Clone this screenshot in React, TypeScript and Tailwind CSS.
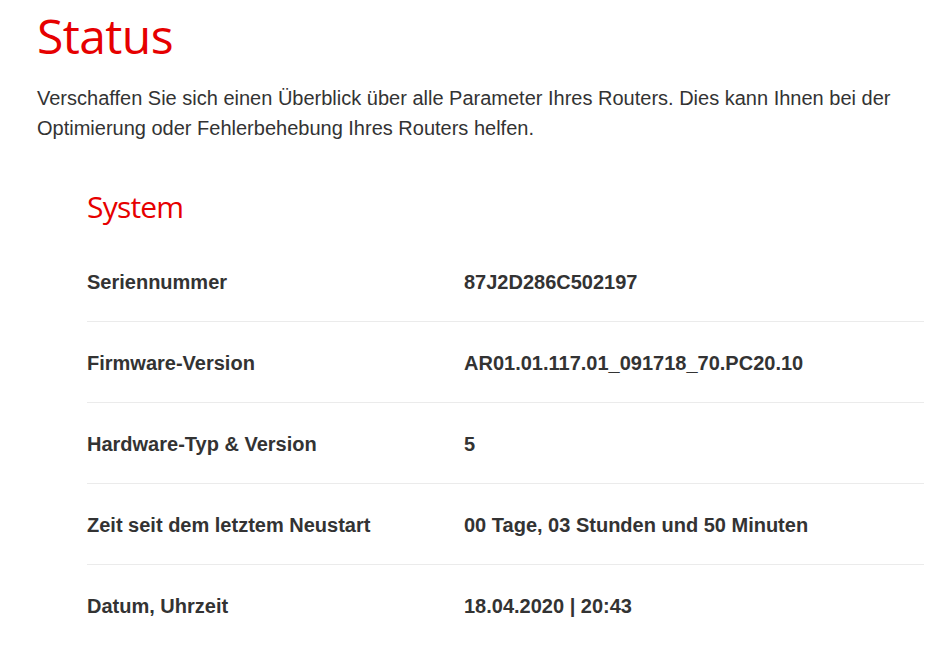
const rows: [string, string][] = [
  ["Seriennummer", "87J2D286C502197"],
  ["Firmware-Version", "AR01.01.117.01_091718_70.PC20.10"],
  ["Hardware-Typ & Version", "5"],
  ["Zeit seit dem letztem Neustart", "00 Tage, 03 Stunden und 50 Minuten"],
  ["Datum, Uhrzeit", "18.04.2020 | 20:43"],
];

export default function App() {
  return (
    <div className="min-h-screen bg-white pl-[37px] pr-[18px] pt-[8px] font-['Liberation_Sans',Arial,sans-serif] text-[#333333]">
      <h1 className="font-['Open_Sans',sans-serif] text-[48px] leading-[56px] tracking-[-0.6px] text-[#e60000]">
        Status
      </h1>
      <p className="mt-[19px] text-[20px] leading-[30px]">
        Verschaffen Sie sich einen Überblick über alle Parameter Ihres Routers. Dies kann Ihnen bei der
        <br />
        Optimierung oder Fehlerbehebung Ihres Routers helfen.
      </p>
      <section className="ml-[50px] mt-[44px]">
        <h2 className="font-['Open_Sans',sans-serif] text-[30px] leading-[40px] tracking-[-0.8px] text-[#e60000]">
          System
        </h2>
        <div className="mt-[14px]">
          {rows.map(([label, value], i) => (
            <div
              key={label}
              className={`flex pt-[30px] pb-[27px] text-[20px] font-bold leading-[23px] ${
                i < rows.length - 1 ? "border-b border-[#ebebeb]" : ""
              }`}
            >
              <div className="w-[377px] shrink-0">{label}</div>
              <div>{value}</div>
            </div>
          ))}
        </div>
      </section>
    </div>
  );
}
